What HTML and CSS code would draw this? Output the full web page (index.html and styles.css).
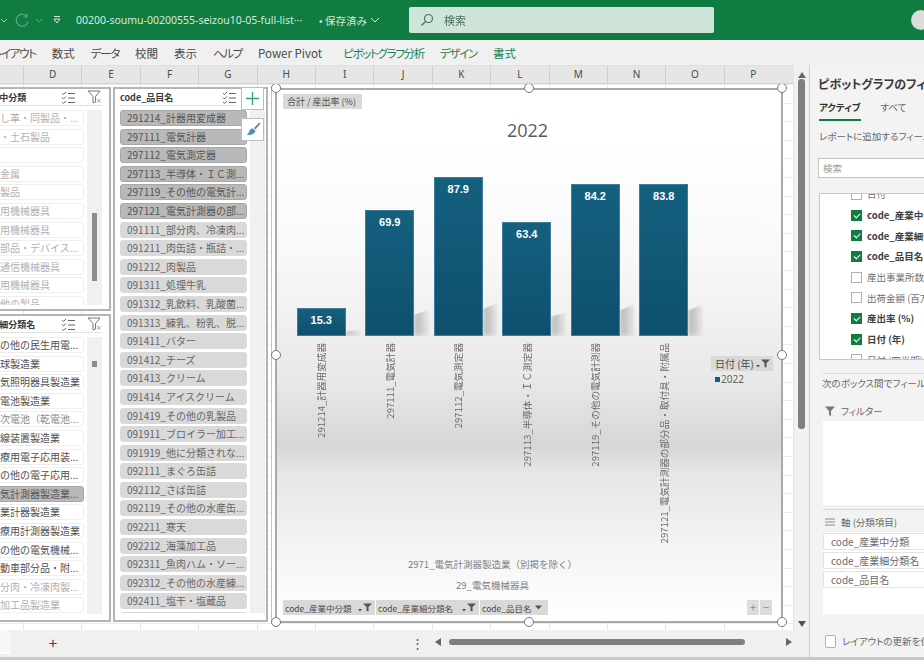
FILE: index.html
```html
<!DOCTYPE html>
<html lang="ja">
<head>
    <meta charset="UTF-8">
    <title>00200-soumu-00200555-seizou10-05-full-list</title>
    <link rel="stylesheet" href="styles.css">
</head>
<body>
<div class="app">
    <header class="titlebar">
        <svg class="qat-chev" width="8" height="5" viewBox="0 0 8 5"><path d="M1 1l3 3 3-3" fill="none" stroke="#a9d0ba"/></svg>
        <svg class="qat-redo" width="16" height="14" viewBox="0 0 16 14"><path d="M13 3.500a6 6 0 1 0 1 5.500M13 .500v3.500h-3.500" fill="none" stroke="#5fa880" stroke-width="1.200"/></svg>
        <svg class="qat-chev2" width="8" height="5" viewBox="0 0 8 5"><path d="M1 1l3 3 3-3" fill="none" stroke="#5fa880"/></svg>
        <svg class="qat-more" width="10" height="10" viewBox="0 0 10 10"><path d="M2 1.500h6M2 4l3 4 3-4z" fill="none" stroke="#d5e9dd"/></svg>
        <span class="filename">00200-soumu-00200555-seizou10-05-full-list···</span>
        <span class="saved">• 保存済み</span>
        <svg width="10" height="6" viewBox="0 0 10 6"><path d="M1 1l4 4 4-4" fill="none" stroke="#d5e9dd"/></svg>
        <div class="searchbox">
            <svg width="14" height="14" viewBox="0 0 14 14"><circle cx="8.500" cy="5.500" r="4" fill="none" stroke="#3d7a5a" stroke-width="1.200"/><path d="M5.500 8.500L1.500 12.500" stroke="#3d7a5a" stroke-width="1.200"/></svg>
            <span>検索</span>
        </div>
        <div class="avatar"></div>
    </header>

    <nav class="ribbon">
        <span class="kana">レイアウト</span><span>数式</span><span class="kana">データ</span><span>校閲</span><span>表示</span><span class="kana">ヘルプ</span><span>Power Pivot</span>
        <span class="ctx kana ctx-first">ピボットグラフ分析</span><span class="ctx kana">デザイン</span><span class="ctx">書式</span>
    </nav>

    <div class="main">
        <div class="work">
            <div class="work-top">
                <div class="sheet-wrap">
                    <div class="colhead">
                        <span>D</span><span>E</span><span>F</span><span>G</span><span>H</span><span>I</span><span>J</span><span>K</span><span>L</span><span>M</span><span>N</span><span>O</span><span>P</span>
                    </div>
                    <div class="sheet">

                        <section class="slicer slicer-a">
                            <div class="slicer-head">
                                <span class="slicer-title">code_産業中分類</span>
                                <svg class="ico-multi" width="15" height="13" viewBox="0 0 15 13"><path d="M1 2l1.500 1.500L5 1M1 6.500L2.500 8 5 5.500M1 11l1.500 1.500L5 10M7 2.500h7M7 7h7M7 11.500h7" fill="none" stroke="#666"/></svg>
                                <svg class="ico-clear" width="15" height="14" viewBox="0 0 15 14"><path d="M1 1h12L8.500 6.500V12L6 13V6.500z" fill="none" stroke="#777"/><path d="M10 9l3.500 3.500M13.500 9L10 12.500" stroke="#d08a70"/></svg>
                            </div>
                            <div class="slicer-body">
                                <ul class="items">
                                    <li class="off">なめし革・同製品・...</li>
                                    <li class="off">窯業・土石製品</li>
                                    <li class="off">鉄鋼</li>
                                    <li class="off">非鉄金属</li>
                                    <li class="off">金属製品</li>
                                    <li class="off">はん用機械器具</li>
                                    <li class="off">生産用機械器具</li>
                                    <li class="off">電子部品・デバイス...</li>
                                    <li class="off">情報通信機械器具</li>
                                    <li class="off">輸送用機械器具</li>
                                    <li class="off">その他の製品</li>
                                </ul>
                                <div class="track"><div class="thumb thumb-a"></div></div>
                            </div>
                        </section>

                        <section class="slicer slicer-b">
                            <div class="slicer-head">
                                <span class="slicer-title">code_産業細分類名</span>
                                <svg class="ico-multi" width="15" height="13" viewBox="0 0 15 13"><path d="M1 2l1.500 1.500L5 1M1 6.500L2.500 8 5 5.500M1 11l1.500 1.500L5 10M7 2.500h7M7 7h7M7 11.500h7" fill="none" stroke="#666"/></svg>
                                <svg class="ico-clear" width="15" height="14" viewBox="0 0 15 14"><path d="M1 1h12L8.500 6.500V12L6 13V6.500z" fill="none" stroke="#777"/><path d="M10 9l3.500 3.500M13.500 9L10 12.500" stroke="#d08a70"/></svg>
                            </div>
                            <div class="slicer-body">
                                <ul class="items">
                                    <li>その他の民生用電...</li>
                                    <li>電球製造業</li>
                                    <li>電気照明器具製造業</li>
                                    <li>蓄電池製造業</li>
                                    <li class="dim">一次電池（乾電池...</li>
                                    <li>Ｘ線装置製造業</li>
                                    <li>医療用電子応用装...</li>
                                    <li>その他の電子応用...</li>
                                    <li class="sel">電気計測器製造業...</li>
                                    <li>工業計器製造業</li>
                                    <li>医療用計測器製造業</li>
                                    <li>その他の電気機械...</li>
                                    <li>自動車部分品・附...</li>
                                    <li class="off">部分肉・冷凍肉製...</li>
                                    <li class="off">肉加工品製造業</li>
                                </ul>
                                <div class="track"><div class="thumb thumb-b"></div></div>
                            </div>
                        </section>

                        <section class="slicer slicer-c">
                            <div class="slicer-head">
                                <span class="slicer-title">code_品目名</span>
                                <svg class="ico-multi" width="15" height="13" viewBox="0 0 15 13"><path d="M1 2l1.500 1.500L5 1M1 6.500L2.500 8 5 5.500M1 11l1.500 1.500L5 10M7 2.500h7M7 7h7M7 11.500h7" fill="none" stroke="#666"/></svg>
                            </div>
                            <div class="slicer-body">
                                <ul class="items">
                                    <li class="sel">291214_計器用変成器</li>
                                    <li class="sel">297111_電気計器</li>
                                    <li class="sel">297112_電気測定器</li>
                                    <li class="sel">297113_半導体・ＩＣ測...</li>
                                    <li class="sel">297119_その他の電気計...</li>
                                    <li class="sel">297121_電気計測器の部...</li>
                                    <li>091111_部分肉、冷凍肉...</li>
                                    <li>091211_肉缶詰・瓶詰・...</li>
                                    <li>091212_肉製品</li>
                                    <li>091311_処理牛乳</li>
                                    <li>091312_乳飲料、乳酸菌...</li>
                                    <li>091313_練乳、粉乳、脱...</li>
                                    <li>091411_バター</li>
                                    <li>091412_チーズ</li>
                                    <li>091413_クリーム</li>
                                    <li>091414_アイスクリーム</li>
                                    <li>091419_その他の乳製品</li>
                                    <li>091911_ブロイラー加工...</li>
                                    <li>091919_他に分類されな...</li>
                                    <li>092111_まぐろ缶詰</li>
                                    <li>092112_さば缶詰</li>
                                    <li>092119_その他の水産缶...</li>
                                    <li>092211_寒天</li>
                                    <li>092212_海藻加工品</li>
                                    <li>092311_魚肉ハム・ソー...</li>
                                    <li>092312_その他の水産練...</li>
                                    <li>092411_塩干・塩蔵品</li>
                                    <li>092412_塩干品</li>
                                </ul>
                                <div class="track"></div>
                            </div>
                        </section>

                        <div class="chart">
                            <div class="field-btn field-value">合計 / 産出率 (%)</div>
                            <div class="chart-title">2022</div>
                            <div class="chart-main">
                                <div class="plot">
                                    <div class="bars">
                                        <div class="col"><div class="bar" style="height:28px">15.3</div></div>
                                        <div class="col"><div class="bar" style="height:126px">69.9</div></div>
                                        <div class="col"><div class="bar" style="height:159px">87.9</div></div>
                                        <div class="col"><div class="bar" style="height:114px">63.4</div></div>
                                        <div class="col"><div class="bar" style="height:152px">84.2</div></div>
                                        <div class="col"><div class="bar" style="height:152px">83.8</div></div>
                                    </div>
                                    <div class="axis-labels">
                                        <div class="col"><span>291214_計器用変成器</span></div>
                                        <div class="col"><span>297111_電気計器</span></div>
                                        <div class="col"><span>297112_電気測定器</span></div>
                                        <div class="col"><span>297113_半導体・ＩＣ測定器</span></div>
                                        <div class="col"><span>297119_その他の電気計測器</span></div>
                                        <div class="col"><span>297121_電気計測器の部分品・取付具・附属品</span></div>
                                    </div>
                                    <div class="axis-level">2971_電気計測器製造業（別掲を除く）</div>
                                    <div class="axis-level axis-level-2">29_電気機械器具</div>
                                </div>
                                <div class="legend">
                                    <div class="field-btn field-legend">日付 (年)
                                        <svg width="14" height="9" viewBox="0 0 14 9"><path d="M0 6h4L2 8.500zM5 .500h9L10.500 4v4.500L8.500 8V4z" fill="#555"/></svg>
                                    </div>
                                    <div class="legend-row"><i></i>2022</div>
                                </div>
                            </div>
                            <div class="chart-bottom">
                                <div class="field-btn field-axis w1">code_産業中分類
                                    <svg width="14" height="9" viewBox="0 0 14 9"><path d="M0 6h4L2 8.500zM5 .500h9L10.500 4v4.500L8.500 8V4z" fill="#555"/></svg>
                                </div>
                                <div class="field-btn field-axis w2">code_産業細分類名
                                    <svg width="14" height="9" viewBox="0 0 14 9"><path d="M0 6h4L2 8.500zM5 .500h9L10.500 4v4.500L8.500 8V4z" fill="#555"/></svg>
                                </div>
                                <div class="field-btn field-axis w3">code_品目名
                                    <svg width="8" height="5" viewBox="0 0 8 5"><path d="M0 .500h7L3.500 4.500z" fill="#555"/></svg>
                                </div>
                                <div class="zoom-btns"><span>+</span><span>−</span></div>
                            </div>
                            <i class="handle h-tl"></i><i class="handle h-tc"></i><i class="handle h-tr"></i>
                            <i class="handle h-ml"></i><i class="handle h-mr"></i>
                            <i class="handle h-bl"></i><i class="handle h-bc"></i><i class="handle h-br"></i>
                        </div>

                        <button class="side-btn side-add">
                            <svg width="15" height="15" viewBox="0 0 15 15"><path d="M7.500 1v13M1 7.500h13" stroke="#3aa06c" stroke-width="1.300"/></svg>
                        </button>
                        <button class="side-btn side-brush">
                            <svg width="16" height="16" viewBox="0 0 16 16"><path d="M9 6l5.500-5.500 1 1L10.500 7.500z" fill="#7a7a7a"/><path d="M8 6.500l2.500 2.500c-1 3-4 4.500-9 4 2-1 2-2.500 3-4.500 1-1.500 2.500-2 3.500-2z" fill="#4f8fb8"/></svg>
                        </button>
                    </div>
                </div>
                <div class="vscroll">
                    <svg width="8" height="6" viewBox="0 0 8 6"><path d="M0 6h8L4 0z" fill="#666"/></svg>
                    <div class="vthumb"></div>
                    <svg width="8" height="6" viewBox="0 0 8 6"><path d="M0 0h8L4 6z" fill="#555"/></svg>
                </div>
            </div>
            <div class="sheetbar">
                <div class="sheet-tab"></div>
                <span class="add-sheet">+</span>
                <span class="dots">⋮</span>
                <svg width="6" height="8" viewBox="0 0 6 8"><path d="M6 0v8L0 4z" fill="#666"/></svg>
                <div class="hthumb"></div>
                <svg class="harrow" width="6" height="8" viewBox="0 0 6 8"><path d="M0 0v8l6-4z" fill="#666"/></svg>
            </div>
        </div>

        <aside class="panel">
            <div class="panel-inner">
                <h3 class="panel-title">ピボットグラフのフィールド</h3>
                <div class="panel-tabs"><span class="on">アクティブ</span><span>すべて</span></div>
                <p class="panel-desc">レポートに追加するフィールドを選択してください:</p>
                <div class="panel-search">検索</div>
                <div class="field-list">
                    <div class="field-items">
                        <label><i class="cb"></i>日付</label>
                        <label class="b"><i class="cb on"></i>code_産業中分類</label>
                        <label class="b"><i class="cb on"></i>code_産業細分類名</label>
                        <label class="b"><i class="cb on"></i>code_品目名</label>
                        <label><i class="cb"></i>産出事業所数</label>
                        <label><i class="cb"></i>出荷金額 (百万円)</label>
                        <label class="b"><i class="cb on"></i>産出率 (%)</label>
                        <label class="b"><i class="cb on"></i>日付 (年)</label>
                        <label><i class="cb"></i>日付 (四半期)</label>
                    </div>
                </div>
                <p class="panel-hint">次のボックス間でフィールドをドラッグしてください:</p>
                <div class="area-head area-filter">
                    <svg width="10" height="10" viewBox="0 0 10 10"><path d="M0 .500h10L6 5v5L4 9V5z" fill="#777"/></svg>フィルター
                </div>
                <div class="area-box area-box-filter"></div>
                <div class="area-sep"></div>
                <div class="area-head">
                    <svg width="10" height="8" viewBox="0 0 10 8"><path d="M0 1h10M0 4h10M0 7h10" stroke="#888"/></svg>軸 (分類項目)
                </div>
                <div class="area-box area-box-axis">
                    <div class="area-item">code_産業中分類</div>
                    <div class="area-item">code_産業細分類名</div>
                    <div class="area-item">code_品目名</div>
                </div>
                <div class="defer"><i class="cb"></i>レイアウトの更新を保留する</div>
            </div>
        </aside>
    </div>
    <div class="statusbar"></div>
</div>
</body>
</html>
```

FILE: styles.css
```css
* {
    box-sizing: border-box;
}
body {
    margin: 0;
    width: 924px;
    height: 660px;
    overflow: hidden;
    background: #f0f0f0;
    font-family: "Noto Sans CJK JP", "Noto Sans", sans-serif;
    color: #555;
}
.app {
    width: 924px;
    height: 660px;
    display: flex;
    flex-direction: column;
    overflow: hidden;
    filter: blur(0.55px);
}

/* title bar */
.titlebar {
    height: 40px;
    flex: none;
    background: #107c41;
    display: flex;
    align-items: center;
    color: #d5e9dd;
    font-size: 11px;
}
.qat-redo {
    margin-left: 6px;
}
.qat-chev2 {
    margin-left: 5px;
}
.qat-more {
    margin-left: 9px;
}
.filename {
    margin-left: 14px;
    width: 240px;
    font-family: "Noto Sans", sans-serif;
    font-size: 10.500px;
    white-space: nowrap;
}
.saved {
    margin-left: 3px;
    margin-right: 3px;
    font-size: 10.500px;
    font-feature-settings: "palt";
}
.searchbox {
    position: absolute;
    left: 409px;
    top: 7px;
    width: 305px;
    height: 26px;
    background: #cfe5da;
    border-radius: 2px;
    display: flex;
    align-items: center;
    padding-left: 11px;
    gap: 10px;
    color: #4a6d5a;
    font-size: 11px;
}
.avatar {
    position: absolute;
    left: 911px;
    top: 10px;
    width: 20px;
    height: 20px;
    border-radius: 50%;
    background: #dcdcdc;
}

/* ribbon tabs */
.ribbon {
    height: 25px;
    flex: none;
    background: #f0f0f0;
    display: flex;
    align-items: center;
    gap: 16px;
    margin-left: -8px;
    font-size: 11.500px;
    color: #4a4a4a;
    font-feature-settings: "palt";
    white-space: nowrap;
}
.ribbon .ctx {
    color: #1a8050;
}
.ribbon .kana {
    letter-spacing: -1.300px;
}
.ribbon .ctx-first {
    margin-left: 5px;
}

.main {
    height: 592px;
    flex: none;
    display: flex;
}
.work {
    width: 809px;
    flex: none;
    display: flex;
    flex-direction: column;
}
.work-top {
    height: 568px;
    display: flex;
}
.sheet-wrap {
    width: 793px;
    display: flex;
    flex-direction: column;
}

/* column header */
.colhead {
    height: 19px;
    flex: none;
    background: #e6e6e6;
    display: flex;
    padding-left: 23px;
    border-bottom: 1px solid #d4d4d4;
    border-top: 1px solid #e0e0e0;
}
.colhead span {
    width: 58.400px;
    flex: none;
    text-align: center;
    font-size: 10px;
    line-height: 17px;
    color: #4a4a4a;
    border-left: 1px solid #cfcfcf;
    font-family: "Noto Sans", sans-serif;
}

/* sheet area */
.sheet {
    position: relative;
    flex: 1;
    overflow: hidden;
    background-color: #fff;
    background-image:
        repeating-linear-gradient(to right, #e6e6e6 0, #e6e6e6 1px, transparent 1px, transparent 58.400px),
        repeating-linear-gradient(to bottom, #ececec 0, #ececec 1px, transparent 1px, transparent 18.600px);
    background-position: 23px 0, 0 0;
}

/* slicers */
.slicer {
    position: absolute;
    background: #fff;
    border: 2px solid #b4b4b4;
    display: flex;
    flex-direction: column;
}
.slicer-a {
    left: -50px;
    top: 3px;
    width: 161px;
    height: 224px;
}
.slicer-b {
    left: -50px;
    top: 230px;
    width: 161px;
    height: 308px;
}
.slicer-c {
    left: 113px;
    top: 3px;
    width: 155px;
    height: 535px;
}
.slicer-head {
    height: 17px;
    flex: none;
    display: flex;
    align-items: center;
    margin-left: 3px;
    margin-right: 7px;
    border-bottom: 1px solid #e2e2e2;
}
.slicer-c .slicer-head {
    margin-left: 5px;
    margin-right: 29px;
}
.slicer-title {
    font-size: 9px;
    font-weight: 700;
    color: #3a3a3a;
    white-space: nowrap;
    flex: 1;
}
.ico-clear {
    margin-left: 11px;
}
.slicer-body {
    flex: none;
    display: flex;
    margin-top: 4px;
    overflow: hidden;
}
.slicer-a .slicer-body {
    height: 195px;
}
.slicer-b .slicer-body {
    height: 277px;
}
.slicer-c .slicer-body {
    height: 503px;
    padding-left: 5px;
}
.items {
    list-style: none;
    margin: 0;
    padding: 0;
    width: 132px;
    flex: none;
}
.slicer-c .items {
    width: 127px;
}
.items li {
    height: 16px;
    margin-bottom: 2.600px;
    border-radius: 3px;
    border: 1px solid #eeeeee;
    background: #fff;
    font-size: 10px;
    line-height: 13px;
    padding-left: 27px;
    white-space: nowrap;
    overflow: hidden;
    color: #4f4f4f;
}
.slicer-b .items li {
    padding-left: 37px;
}
.slicer-c .items li {
    padding-left: 6px;
    background: #d9d9d9;
    border-color: #dadada;
    color: #666;
}
.items li.off {
    color: #b0b0b0;
}
.items li.dim {
    color: #888;
}
.items li.sel,
.slicer-b .items li.sel,
.slicer-c .items li.sel {
    background: #b9b9b9;
    border-color: #a8a8a8;
    color: #555;
}
.track {
    width: 15px;
    margin-left: 3px;
    background: #f0f0f0;
    padding-left: 5px;
}
.thumb {
    width: 5px;
    background: #8c8c8c;
}
.thumb-a {
    height: 68px;
    margin-top: 103px;
}
.thumb-b {
    height: 6px;
    margin-top: 24px;
}

/* buttons that stick out beside the chart */
.side-btn {
    position: absolute;
    left: 241px;
    width: 23px;
    height: 23px;
    background: #fff;
    border: 1px solid #bdbdbd;
    padding: 0;
    display: flex;
    align-items: center;
    justify-content: center;
}
.side-add {
    top: 3px;
}
.side-brush {
    top: 34px;
}

/* chart */
.chart {
    position: absolute;
    left: 275px;
    top: 4px;
    width: 508px;
    height: 535px;
    border: 2px solid #a9a9a9;
    box-shadow: -3px 0 0 #fff, -4px 0 0 #c4c4c4;
    padding: 4px 9px 0 6px;
    background: linear-gradient(to bottom, #fff 10%, #f8f8f8 32%, #e8e8e8 55%, #d6d6d6 67%, #e6e6e6 72%, #f2f2f2 84%, #fff 100%);
}
.field-btn {
    background: #d9d9d9;
    color: #4a4a4a;
    font-size: 9px;
    height: 15px;
    line-height: 14px;
    padding: 0 4px;
    white-space: nowrap;
    display: flex;
    align-items: center;
    justify-content: space-between;
}
.field-value {
    width: 79px;
}
.chart-title {
    margin-top: 9px;
    height: 24px;
    line-height: 24px;
    text-align: center;
    font-family: "Open Sans", sans-serif;
    font-size: 18px;
    color: #5a5a5a;
}
.chart-main {
    height: 451px;
    display: flex;
}
.plot {
    margin-left: 4px;
    width: 411px;
    flex: none;
}
.bars {
    height: 194px;
    display: flex;
    align-items: flex-end;
}
.col {
    flex: 1;
    display: flex;
    justify-content: center;
}
.bar {
    position: relative;
    width: 49px;
    background: linear-gradient(to bottom, #15607f, #0e4f6e);
    outline: 1px solid #3e7c99;
    outline-offset: -1px;
    color: #fff;
    font-family: "Liberation Sans", sans-serif;
    font-weight: 700;
    font-size: 11px;
    line-height: 14px;
    padding-top: 5px;
    text-align: center;
}
.bar::after {
    content: "";
    position: absolute;
    left: 100%;
    bottom: 0;
    width: 15px;
    height: 21%;
    background: linear-gradient(to right, #b2b2b2, rgba(210, 210, 210, 0.2));
    clip-path: polygon(0 20%, 100% 0, 100% 100%, 0 100%);
    filter: blur(2.500px);
}
.axis-labels {
    height: 220px;
    padding-top: 7px;
    display: flex;
}
.axis-labels .col {
    align-items: flex-start;
}
.axis-labels span {
    writing-mode: vertical-rl;
    text-orientation: sideways;
    transform: rotate(180deg);
    font-size: 9.600px;
    line-height: 12px;
    color: #6a6a6a;
    white-space: nowrap;
}
.axis-level {
    height: 16px;
    line-height: 16px;
    text-align: center;
    font-size: 9.500px;
    color: #808080;
}
.axis-level-2 {
    margin-top: 5px;
}
.legend {
    margin-left: 13px;
    margin-top: 214px;
}
.field-legend {
    width: 62px;
    padding-right: 3px;
    font-size: 10px;
}
.legend-row {
    margin-top: 2px;
    padding-left: 4px;
    display: flex;
    align-items: center;
    gap: 1px;
    font-size: 10px;
    line-height: 13px;
    color: #666;
    font-family: "Noto Sans", sans-serif;
}
.legend-row i {
    width: 5px;
    height: 5px;
    background: #156082;
}
.chart-bottom {
    margin-top: 7px;
    display: flex;
    gap: 1px;
}
.field-axis {
    padding: 0 3px 0 2px;
    font-size: 8.500px;
}
.w1 {
    width: 92px;
}
.w2 {
    width: 103px;
}
.w3 {
    width: 68px;
    padding-right: 5px;
}
.zoom-btns {
    margin-left: auto;
    display: flex;
    gap: 1px;
}
.zoom-btns span {
    width: 12px;
    height: 15px;
    background: #dcdcdc;
    color: #8a8a8a;
    font-size: 11px;
    line-height: 14px;
    text-align: center;
}
.handle {
    position: absolute;
    width: 10px;
    height: 10px;
    border-radius: 50%;
    background: #fff;
    border: 1.500px solid #777;
}
.h-tl { left: -6px; top: -7px; }
.h-tc { left: 247px; top: -7px; }
.h-tr { right: -6px; top: -7px; }
.h-ml { left: -6px; top: 260px; }
.h-mr { right: -6px; top: 260px; }
.h-bl { left: -6px; bottom: -6px; }
.h-bc { left: 247px; bottom: -6px; }
.h-br { right: -6px; bottom: -6px; }

/* vertical scroll bar */
.vscroll {
    width: 16px;
    background: #f1f1f1;
    border-left: 1px solid #e4e4e4;
    display: flex;
    flex-direction: column;
    align-items: center;
    padding-top: 7px;
}
.vthumb {
    width: 7px;
    height: 350px;
    margin-top: 1px;
    border-radius: 3px;
    background: #7f7f7f;
}
.vscroll svg:last-child {
    margin-top: auto;
    margin-bottom: 3px;
}

/* sheet tabs bar */
.sheetbar {
    flex: 1;
    display: flex;
    align-items: center;
    background: #f0f0f0;
    position: relative;
    padding-bottom: 3px;
}
.sheet-tab {
    width: 10px;
    height: 24px;
    background: #f8f8f8;
    border-bottom: 2px solid #fff;
    border-radius: 0 4px 0 0;
    align-self: flex-start;
}
.add-sheet {
    margin-left: 37px;
    width: 12px;
    text-align: center;
    font-size: 15px;
    line-height: 15px;
    color: #444;
}
.dots {
    margin-left: 352px;
    margin-right: 20px;
    font-size: 13px;
    color: #555;
    width: 4px;
}
.hthumb {
    width: 296px;
    height: 6px;
    margin-left: 8px;
    border-radius: 3px;
    background: #7f7f7f;
}
.harrow {
    margin-left: 41px;
}

/* field panel */
.panel {
    flex: 1;
    overflow: hidden;
    background: #f3f3f3;
    border-left: 1px solid #cfcfcf;
}
.panel-inner {
    width: 340px;
    padding-left: 8px;
    font-feature-settings: "palt";
}
.panel-title {
    margin: 10px 0 0;
    font-size: 12px;
    line-height: 18px;
    font-weight: 700;
    color: #3a3a3a;
    white-space: nowrap;
}
.panel-tabs {
    margin-top: 6px;
    margin-left: 1px;
    display: flex;
    gap: 20px;
    font-size: 9.500px;
    line-height: 16px;
    color: #666;
}
.panel-tabs span {
    padding-bottom: 4px;
    border-bottom: 2px solid transparent;
}
.panel-tabs .on {
    font-weight: 700;
    color: #333;
    border-bottom-color: #107c41;
}
.panel-desc {
    margin: 8px 0 0 1px;
    font-size: 9.500px;
    line-height: 14px;
    color: #666;
    white-space: nowrap;
}
.panel-search {
    margin-top: 15px;
    height: 20px;
    background: #fff;
    border: 1px solid #c6c6c6;
    padding-left: 4px;
    font-size: 9.500px;
    line-height: 18px;
    color: #999;
}
.field-list {
    margin: 15px 0 0 1px;
    height: 167px;
    background: #fff;
    border: 1px solid #c6c6c6;
    overflow: hidden;
}
.field-items {
    margin-top: -10px;
    padding-left: 31px;
}
.field-items label {
    display: flex;
    align-items: center;
    height: 20.700px;
    gap: 5px;
    font-size: 9.500px;
    color: #6f6f6f;
    white-space: nowrap;
}
.field-items label.b {
    font-weight: 700;
    color: #404040;
    font-feature-settings: normal;
}
.cb {
    width: 11px;
    height: 11px;
    flex: none;
    display: block;
    background: #fff;
    border: 1px solid #b0b0b0;
}
.cb.on {
    background: #107c41;
    border-color: #107c41;
    position: relative;
}
.cb.on::after {
    content: "";
    position: absolute;
    left: 3px;
    top: 1px;
    width: 3px;
    height: 5px;
    border: solid #fff;
    border-width: 0 1px 1px 0;
    transform: rotate(45deg);
}
.panel-hint {
    margin: 13px 0 0 4px;
    padding-top: 2px;
    border-top: 1px solid #dedede;
    font-size: 9.500px;
    line-height: 14px;
    color: #666;
    white-space: nowrap;
}
.area-head {
    margin: 5px 0 0 7px;
    display: flex;
    align-items: center;
    gap: 6px;
    font-size: 9.500px;
    line-height: 14px;
    color: #666;
}
.area-filter {
    margin-top: 14px;
}
.area-box {
    margin: 3px 0 0 5px;
    background: #fff;
}
.area-box-filter {
    height: 84px;
}
.area-sep {
    margin: 4px 0 0 5px;
    border-top: 1px solid #d8d8d8;
}
.area-box-axis {
    height: 82px;
    padding-top: 1px;
    display: flex;
    flex-direction: column;
    gap: 2px;
}
.area-item {
    height: 17px;
    padding-left: 7px;
    border: 1px solid #e4e4e4;
    font-size: 10px;
    line-height: 15px;
    color: #6a6a6a;
    font-feature-settings: normal;
}
.defer {
    margin: 19px 0 0 7px;
    display: flex;
    align-items: center;
    gap: 6px;
    font-size: 9.500px;
    line-height: 16px;
    color: #666;
    white-space: nowrap;
}
.defer .cb {
    border-radius: 2px;
    width: 11px;
    height: 13px;
}
.statusbar {
    height: 3px;
    flex: none;
    background: #c8c8c8;
}
```
